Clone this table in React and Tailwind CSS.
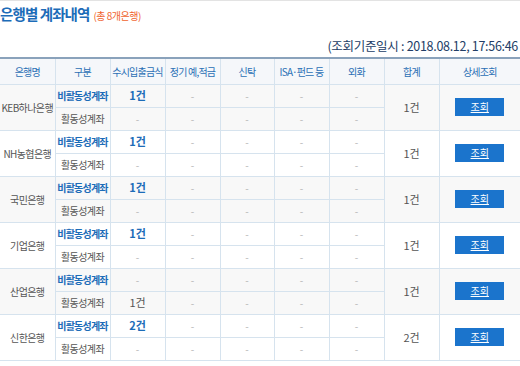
import React from 'react';

const banks = [
  { name: 'KEB하나은행', inactive: '1건', active: '-', total: '1건' },
  { name: 'NH농협은행', inactive: '1건', active: '-', total: '1건' },
  { name: '국민은행', inactive: '1건', active: '-', total: '1건' },
  { name: '기업은행', inactive: '1건', active: '-', total: '1건' },
  { name: '산업은행', inactive: '-', active: '1건', total: '1건' },
  { name: '신한은행', inactive: '2건', active: '-', total: '2건' },
];

const headers = ['은행명', '구분', '수시입출금식', '정기 예,적금', '신탁', 'ISA·펀드 등', '외화', '합계', '상세조회'];
const widths = ['w-[55px]', 'w-[55px]', 'w-[55px]', 'w-[55px]', 'w-[54px]', 'w-[55px]', 'w-[55px]', 'w-[55px]', 'w-[81px]'];

function Dash() {
  return <span className="text-[#b5b5b5]">-</span>;
}

export default function App() {
  return (
    <div
      className="w-[520px] h-[366px] overflow-hidden bg-white border-t border-[#e3e3e3]"
      style={{ fontFamily: '"Noto Sans CJK KR", "Noto Sans", sans-serif' }}
    >
      <div className="flex items-baseline h-[26px] pt-[1px]">
        <h1 className="text-[14.5px] font-bold text-[#1c6cb8] tracking-[-0.9px] leading-[24px]">은행별 계좌내역</h1>
        <span className="ml-[4px] text-[10px] text-[#f0632d] tracking-[-0.5px]">(총 8개은행)</span>
      </div>

      <div className="h-[30px] flex items-center justify-end pr-[2px] pt-[8px]">
        <span className="text-[12.5px] text-[#223d66] tracking-[-0.3px] whitespace-nowrap">(조회기준일시 : 2018.08.12, 17:56:46</span>
      </div>

      <table className="table-fixed border-collapse w-[520px] border-t-2 border-t-[#8aa2bb] text-[10px]">
        <thead>
          <tr className="h-[26px] bg-[#f5f7fa]">
            {headers.map((h, i) => (
              <th
                key={h}
                className={`${widths[i]} font-normal text-[#2a6fb5] border-b border-[#d6e3ee] ${i > 0 ? 'border-l' : ''} border-[#d6e3ee] whitespace-nowrap tracking-[-0.8px] p-0`}
              >
                {h}
              </th>
            ))}
          </tr>
        </thead>
        <tbody>
          {banks.map((b, idx) => {
            const bg = idx % 2 === 0 ? 'bg-[#f8f8f8]' : 'bg-white';
            return (
              <React.Fragment key={b.name}>
                <tr className={`h-[23px] ${bg}`}>
                  <td rowSpan={2} className="text-center text-[#555] border-b border-[#d6e3ee] tracking-[-0.6px] whitespace-nowrap p-0">
                    {b.name}
                  </td>
                  <td className="text-center font-bold text-[#1c6cb8] border-l border-b border-[#d6e3ee] tracking-[-0.8px] whitespace-nowrap p-0">
                    비활동성계좌
                  </td>
                  <td className="text-center border-l border-b border-[#d6e3ee] p-0">
                    {b.inactive === '-' ? <Dash /> : <span className="font-bold text-[#1c6cb8] text-[11px]">{b.inactive}</span>}
                  </td>
                  {[0, 1, 2, 3].map((k) => (
                    <td key={k} className="text-center border-l border-b border-[#d6e3ee] p-0">
                      <Dash />
                    </td>
                  ))}
                  <td rowSpan={2} className="text-center text-[#555] text-[11px] border-l border-b border-[#d6e3ee] p-0">
                    {b.total}
                  </td>
                  <td rowSpan={2} className="border-l border-b border-[#d6e3ee] p-0">
                    <div className="flex justify-center">
                      <button className="w-[49px] h-[18px] bg-[#1b74cc] text-white text-[10px] underline leading-none">
                        조회
                      </button>
                    </div>
                  </td>
                </tr>
                <tr className={`h-[23px] ${bg}`}>
                  <td className="text-center text-[#555] border-l border-b border-[#d6e3ee] tracking-[-0.6px] whitespace-nowrap p-0">
                    활동성계좌
                  </td>
                  <td className="text-center border-l border-b border-[#d6e3ee] p-0">
                    {b.active === '-' ? <Dash /> : <span className="text-[#555] text-[11px]">{b.active}</span>}
                  </td>
                  {[0, 1, 2, 3].map((k) => (
                    <td key={k} className="text-center border-l border-b border-[#d6e3ee] p-0">
                      <Dash />
                    </td>
                  ))}
                </tr>
              </React.Fragment>
            );
          })}
        </tbody>
      </table>
    </div>
  );
}
